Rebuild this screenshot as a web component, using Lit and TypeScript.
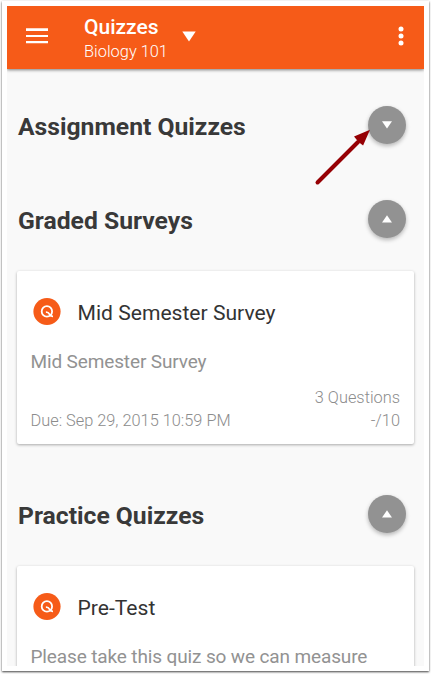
import { LitElement, html, css, svg } from "lit";
import { customElement, property } from "lit/decorators.js";

interface Quiz {
  title: string;
  description: string;
  due?: string;
  questions?: string;
  points?: string;
}

interface Section {
  name: string;
  open: boolean;
  quizzes: Quiz[];
}

const sections: Section[] = [
  { name: "Assignment Quizzes", open: false, quizzes: [] },
  {
    name: "Graded Surveys",
    open: true,
    quizzes: [
      {
        title: "Mid Semester Survey",
        description: "Mid Semester Survey",
        due: "Due: Sep 29, 2015 10:59 PM",
        questions: "3 Questions",
        points: "-/10",
      },
    ],
  },
  {
    name: "Practice Quizzes",
    open: true,
    quizzes: [
      {
        title: "Pre-Test",
        description: "Please take this quiz so we can measure",
      },
    ],
  },
];

@customElement("quiz-toolbar")
export class QuizToolbar extends LitElement {
  static styles = css`
    :host {
      display: flex;
      flex: none;
      align-items: center;
      height: 63px;
      box-sizing: border-box;
      padding: 0 18px 3px;
      background: #f65b18;
      color: #fff;
      box-shadow: 0 1px 3px rgba(0, 0, 0, 0.5);
      z-index: 1;
    }
    .menu {
      width: 24px;
      height: 16px;
      margin-right: 35px;
    }
    .title {
      font-size: 21px;
      line-height: 26px;
      font-weight: 500;
    }
    .course {
      font-size: 16.4px;
      line-height: 24px;
      font-weight: 300;
    }
    .names {
      width: 98px;
      white-space: nowrap;
      padding-top: 6px;
    }
    .caret {
      width: 14px;
      height: 11px;
    }
    .more {
      width: 6px;
      height: 20px;
      margin-left: auto;
      margin-right: 2px;
    }
    svg {
      display: block;
      fill: currentColor;
    }
  `;

  render() {
    return html`
      <svg class="menu" viewBox="0 0 24 16">
        <path d="M1 .3h22v2.7H1zM1 7h22v2.1H1zM1 13h22v2.2H1z" />
      </svg>
      <div class="names">
        <div class="title">Quizzes</div>
        <div class="course">Biology 101</div>
      </div>
      <svg class="caret" viewBox="0 0 14 11"><path d="M0.3 0.5h13.4L7 10.5z" /></svg>
      <svg class="more" viewBox="0 0 6 20">
        ${[3, 10, 17].map((y) => svg`<circle cx="3" cy=${y} r="2.5" />`)}
      </svg>
    `;
  }
}

@customElement("quiz-card")
export class QuizCard extends LitElement {
  @property({ attribute: false }) quiz!: Quiz;

  static styles = css`
    :host {
      display: block;
      box-sizing: border-box;
      height: 173px;
      padding: 26px 14px 0 13.5px;
      background: #fff;
      border-radius: 2px;
      box-shadow: 0 1px 3px rgba(0, 0, 0, 0.32);
      white-space: nowrap;
    }
    .head {
      display: flex;
      align-items: center;
      gap: 16px;
      height: 30px;
      padding-left: 2px;
    }
    .badge {
      width: 29px;
      height: 29px;
      flex: none;
      margin-top: -2px;
    }
    .title {
      font-size: 21.1px;
      line-height: 30px;
      padding-top: 1px;
      color: #333;
    }
    .description {
      margin-top: 21px;
      font-size: 19px;
      letter-spacing: -0.13px;
      line-height: 28px;
      color: #929292;
    }
    .foot {
      display: flex;
      justify-content: space-between;
      align-items: flex-end;
      margin-top: 11px;
      font-size: 16.35px;
      font-weight: 300;
      line-height: 22.5px;
      color: #8c8c8c;
    }
    .score {
      text-align: right;
    }
  `;

  render() {
    const { title, description, due, questions, points } = this.quiz;
    return html`
      <div class="head">
        <svg class="badge" viewBox="0 0 29 29">
          <circle cx="14" cy="14.5" r="13.6" fill="#f65b18" />
          <g fill="none" stroke="#fff" stroke-width="1.8">
            <circle cx="13.9" cy="14.4" r="5.2" />
            <path d="M12.9 15.2q2.5 -.1 3.5 2q1 2.2 3.6 2.1" />
          </g>
        </svg>
        <div class="title">${title}</div>
      </div>
      <div class="description">${description}</div>
      ${due
        ? html`<div class="foot">
            <div class="due">${due}</div>
            <div class="score">
              <div>${questions}</div>
              <div>${points}</div>
            </div>
          </div>`
        : ""}
    `;
  }
}

@customElement("quiz-section")
export class QuizSection extends LitElement {
  @property({ attribute: false }) section!: Section;

  static styles = css`
    :host {
      display: block;
    }
    .bar {
      display: flex;
      align-items: center;
      justify-content: space-between;
      height: 94px;
      padding: 0 8px 0 1px;
    }
    .name {
      font-size: 24.7px;
      line-height: 32px;
      font-weight: 700;
      color: #393939;
      padding-top: 1px;
      white-space: nowrap;
    }
    .toggle {
      display: grid;
      place-items: center;
      box-sizing: border-box;
      width: 38px;
      height: 38px;
      margin-top: -2px;
      padding: 0;
      border: 0;
      border-radius: 50%;
      background: #929292;
      box-shadow: 0 2px 4px rgba(0, 0, 0, 0.28);
    }
    .arrow {
      width: 10px;
      height: 8px;
      fill: #fff;
    }
    quiz-card {
      margin: 4px 0 24px;
    }
  `;

  render() {
    const { name, open, quizzes } = this.section;
    return html`
      <div class="bar">
        <div class="name">${name}</div>
        <button class="toggle" aria-label=${open ? "Collapse" : "Expand"}>
          <svg class="arrow" viewBox="0 0 10 8">
            <path d=${open ? "M0 7.5h10L5 .3z" : "M0 .3h10L5 7.5z"} />
          </svg>
        </button>
      </div>
      ${quizzes.map((quiz) => html`<quiz-card .quiz=${quiz}></quiz-card>`)}
    `;
  }
}

@customElement("app-root")
export class AppRoot extends LitElement {
  static styles = css`
    :host {
      display: block;
      box-sizing: border-box;
      height: 674px;
      padding: 1px 2px 3px;
      background: #fff;
      font-family: Roboto, "Liberation Sans", sans-serif;
    }
    .frame {
      position: relative;
      box-sizing: border-box;
      height: 670px;
      padding: 5px;
      background: #fff;
      box-shadow: 0 1px 2px rgba(0, 0, 0, 0.75);
    }
    .screen {
      display: flex;
      flex-direction: column;
      height: 660px;
      overflow: hidden;
      background: #f9f9f9;
    }
    .list {
      padding: 10px 10px 0;
    }
    .pointer {
      position: absolute;
      left: 308px;
      top: 125px;
      width: 64px;
      height: 64px;
    }
  `;

  render() {
    return html`
      <div class="frame">
        <div class="screen">
          <quiz-toolbar></quiz-toolbar>
          <div class="list">
            ${sections.map((s) => html`<quiz-section .section=${s}></quiz-section>`)}
          </div>
        </div>
        <svg class="pointer" viewBox="310 126 64 64">
          <path d="M317.5 182.5L358 142" stroke="#960004" stroke-width="4" stroke-linecap="round" />
          <path d="M370 129.8L363.1 145.5L358.5 142L354 136.6z" fill="#960004" />
        </svg>
      </div>
    `;
  }
}
